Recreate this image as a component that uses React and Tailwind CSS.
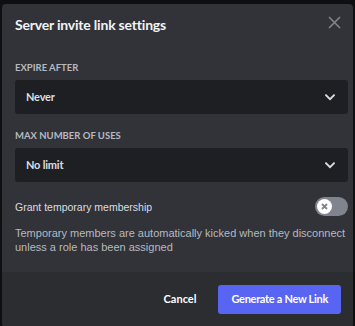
import { useState } from "react";

const bold = { fontFamily: 'Lato, "Liberation Sans", Arial, sans-serif' };
const body = { fontFamily: '"Liberation Sans", Arial, sans-serif' };

const Chevron = () => (
    <svg width="10" height="7" viewBox="0 0 10 7" fill="none">
        <path d="M1 1.2L5 5.2L9 1.2" stroke="#dbdee1" strokeWidth="1.8" strokeLinecap="square" />
    </svg>
);

const SelectBox = ({ value }) => (
    <div className="h-[34px] rounded-[3px] bg-[#1e1f22] flex items-center justify-between pl-[11px] pr-[13px]">
        <span className="text-[11px] font-bold tracking-[-0.2px] text-[#dbdee1]" style={bold}>
            {value}
        </span>
        <Chevron />
    </div>
);

const Label = ({ children, className = "" }) => (
    <div className={`text-[9.5px] leading-[14px] font-bold uppercase text-[#b5bac1] ${className}`} style={bold}>
        {children}
    </div>
);

export default function App() {
    const [temp, setTemp] = useState(false);

    return (
        <div className="w-[355px] h-[326px] overflow-hidden bg-[#0e0f11] pt-[4px] px-[2px]">
            <div className="rounded-[4px] bg-[#313338] overflow-hidden flex flex-col">
                <div className="flex items-start justify-between pt-[11px] pl-[13px] pr-[12px]">
                    <h1 className="text-[14px] leading-[20px] font-bold tracking-[-0.2px] text-[#f2f3f5]" style={bold}>
                        Server invite link settings
                    </h1>
                    <button className="mt-[1px] text-[#80848e]">
                        <svg width="13" height="13" viewBox="0 0 13 13" fill="none">
                            <path d="M1 1L12 12M12 1L1 12" stroke="currentColor" strokeWidth="1.6" />
                        </svg>
                    </button>
                </div>

                <div className="pl-[13px] pr-[5px] pb-[18px]">
                    <Label className="mt-[26px] mb-[5px]">Expire After</Label>
                    <SelectBox value="Never" />

                    <Label className="mt-[15px] mb-[5px]">Max Number of Uses</Label>
                    <SelectBox value="No limit" />

                    <div className="mt-[15px] flex items-center justify-between">
                        <span className="text-[10.5px] leading-[16px] text-[#dbdee1]" style={body}>
                            Grant temporary membership
                        </span>
                        <button
                            onClick={() => setTemp(!temp)}
                            className="w-[33px] h-[19px] rounded-full bg-[#80848e] flex items-center px-[2px]"
                        >
                            <span className="w-[15px] h-[15px] rounded-full bg-white flex items-center justify-center">
                                <svg width="7" height="7" viewBox="0 0 7 7" fill="none">
                                    <path d="M1 1L6 6M6 1L1 6" stroke="#80848e" strokeWidth="1.8" />
                                </svg>
                            </span>
                        </button>
                    </div>

                    <p className="mt-[10px] text-[11px] leading-[14px] text-[#b5bac1]" style={body}>
                        Temporary members are automatically kicked when they disconnect unless a role has been assigned
                    </p>
                </div>

                <div className="h-[55px] bg-[#2b2d31] flex items-start justify-end pt-[13px] px-[12px]">
                    <button className="h-[29px] mr-[22px] text-[11px] font-bold text-white" style={bold}>
                        Cancel
                    </button>
                    <button className="h-[29px] px-[13px] rounded-[3px] bg-[#5865f2] text-[11px] font-bold tracking-[-0.3px] text-white" style={bold}>
                        Generate a New Link
                    </button>
                </div>
            </div>
        </div>
    );
}
